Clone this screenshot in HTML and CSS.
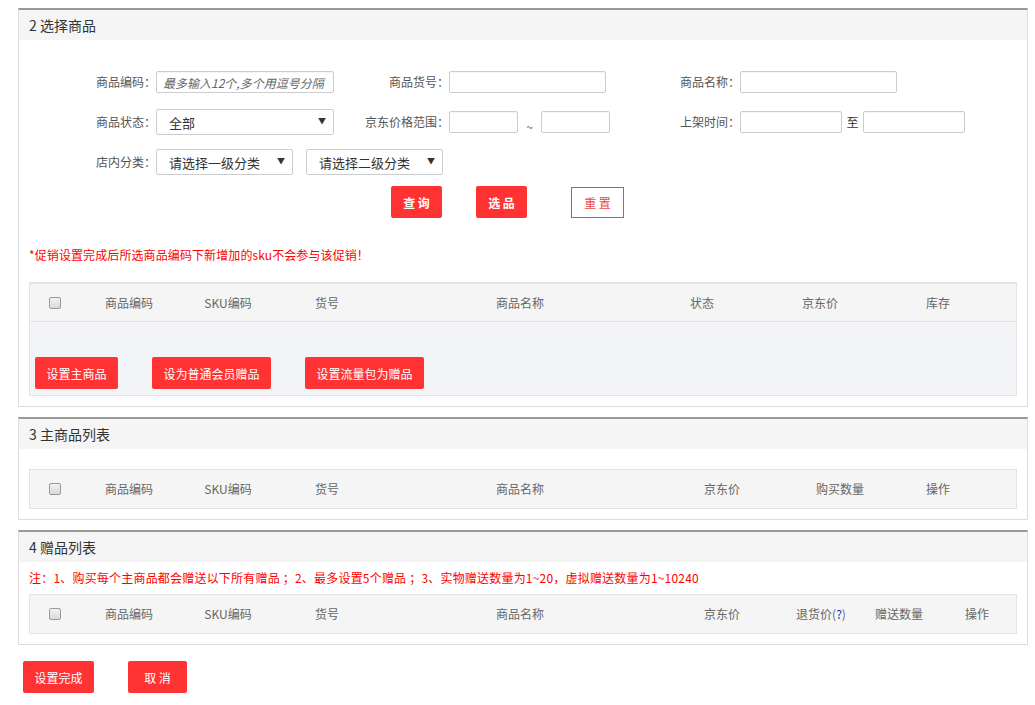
FILE: index.html
```html
<!DOCTYPE html>
<html lang="zh-CN">
<head>
<meta charset="utf-8">
<title>选择商品</title>
<link rel="stylesheet" href="styles.css">
</head>
<body>
<div class="page">
  <section class="panel">
    <div class="panel-head">2 选择商品</div>
    <div class="form">
      <div class="row">
        <label class="lab lab-a">商品编码<span class="p">：</span></label>
        <input class="ipt ipt-a" type="text" placeholder="最多输入12个,多个用逗号分隔">
        <label class="lab lab-b">商品货号<span class="p">：</span></label>
        <div class="cell-b"><input class="ipt ipt-b" type="text"></div>
        <label class="lab lab-c">商品名称<span class="p">：</span></label>
        <input class="ipt ipt-b" type="text">
      </div>
      <div class="row">
        <label class="lab lab-a">商品状态<span class="p">：</span></label>
        <div class="sel sel-a"><select><option>全部</option></select></div>
        <label class="lab lab-b">京东价格范围<span class="p">：</span></label>
        <div class="cell-b">
          <input class="ipt ipt-s" type="text"><span class="tilde">~</span><input class="ipt ipt-s" type="text">
        </div>
        <label class="lab lab-c">上架时间<span class="p">：</span></label>
        <input class="ipt ipt-t" type="text"><span class="to">至</span><input class="ipt ipt-t" type="text">
      </div>
      <div class="row">
        <label class="lab lab-a">店内分类<span class="p">：</span></label>
        <div class="sel sel-b"><select><option>请选择一级分类</option></select></div>
        <div class="sel sel-b sel-gap"><select><option>请选择二级分类</option></select></div>
      </div>
      <div class="row btn-row">
        <button class="btn btn-bold btn-q">查 询</button>
        <button class="btn btn-bold btn-p">选 品</button>
        <button class="btn-line">重 置</button>
      </div>
    </div>
    <p class="note note-1">*促销设置完成后所选商品编码下新增加的sku不会参与该促销<span class="p">！</span></p>
    <div class="table table-1">
      <div class="thead cols-1">
        <span><input class="chk" type="checkbox"></span>
        <span>商品编码</span><span>SKU编码</span><span>货号</span><span>商品名称</span>
        <span>状态</span><span>京东价</span><span>库存</span><span></span>
      </div>
      <div class="tbody-acts">
        <button class="btn btn-w1">设置主商品</button>
        <button class="btn btn-w2">设为普通会员赠品</button>
        <button class="btn btn-w2 btn-gap3">设置流量包为赠品</button>
      </div>
    </div>
  </section>

  <section class="panel">
    <div class="panel-head">3 主商品列表</div>
    <div class="table table-2">
      <div class="thead cols-2">
        <span><input class="chk" type="checkbox"></span>
        <span>商品编码</span><span>SKU编码</span><span>货号</span><span>商品名称</span>
        <span>京东价</span><span>购买数量</span><span>操作</span><span></span>
      </div>
    </div>
  </section>

  <section class="panel">
    <div class="panel-head">4 赠品列表</div>
    <p class="note note-2">注<span class="p">：</span>1、购买每个主商品都会赠送以下所有赠品 <span class="p">；</span>2、最多设置5个赠品 <span class="p">；</span>3、实物赠送数量为1~20<span class="p">，</span>虚拟赠送数量为1~10240</p>
    <div class="table table-3">
      <div class="thead cols-3">
        <span><input class="chk" type="checkbox"></span>
        <span>商品编码</span><span>SKU编码</span><span>货号</span><span>商品名称</span>
        <span>京东价</span><span>退货价(<span class="q">?</span>)</span><span>赠送数量</span><span>操作</span><span></span>
      </div>
    </div>
  </section>

  <div class="footer-acts">
    <button class="btn btn-done">设置完成</button>
    <button class="btn btn-cancel">取 消</button>
  </div>
</div>
</body>
</html>
```

FILE: styles.css
```css
* { box-sizing: border-box; }
body {
  margin: 0;
  background: #fff;
  font-family: "Noto Sans CJK SC", "Liberation Sans", sans-serif;
  font-size: 12px;
  color: #333;
}
.page { padding: 8px 0 0 18px; width: 1028px; }
.p { font-family: "Noto Sans CJK JP", "Noto Sans CJK SC", sans-serif; }

.panel {
  width: 1010px;
  border: 1px solid #ddd;
  border-top: 2px solid #999;
  margin-bottom: 10px;
  padding-bottom: 10px;
}
.panel-head {
  height: 30px;
  line-height: 30px;
  background: #f5f5f5;
  padding-left: 10px;
  font-size: 14px;
  color: #333;
}

.form { padding-top: 22px; }
.row { display: flex; align-items: center; height: 40px; }
.lab { text-align: right; color: #555; font-size: 12px; white-space: nowrap; line-height: 20px; }
.lab-a { width: 137px; }
.lab-b { width: 115px; }
.lab-c { width: 130px; }
.cell-b { width: 161px; display: flex; align-items: center; }

.ipt {
  height: 22px;
  border: 1px solid #ccc;
  border-radius: 2px;
  background: #fff;
  box-shadow: inset 0 1px 1px rgba(0,0,0,0.04);
  font-family: inherit;
  font-size: 12px;
  padding: 0 6px;
  outline: none;
}
.ipt::placeholder { color: #666; font-style: italic; }
.ipt-a { width: 178px; }
.ipt-b { width: 157px; }
.ipt-s { width: 69px; }
.ipt-t { width: 102px; }
.tilde { width: 23px; text-align: center; padding-top: 9px; color: #555; font-size: 12px; line-height: 12px; }
.to { width: 21px; text-align: center; color: #333; font-size: 12px; line-height: 20px; }

.sel { position: relative; height: 26px; }
.sel select {
  -webkit-appearance: none;
  appearance: none;
  width: 100%;
  height: 26px;
  border: 1px solid #ccc;
  border-radius: 2px;
  background: #fff;
  font-family: inherit;
  font-size: 13px;
  color: #333;
  padding: 0 0 0 12px;
  outline: none;
}
.sel::after {
  content: "▼";
  position: absolute;
  right: 8px;
  top: 8px;
  font-size: 8px;
  line-height: 8px;
  color: #333;
}
.sel-a { width: 178px; }
.sel-b { width: 137px; }
.sel-gap { margin-left: 13px; }

.btn {
  height: 32px;
  border: 0;
  border-radius: 2px;
  background: #ff3333;
  color: #fff;
  font-family: inherit;
  font-size: 12px;
  padding: 0;
  cursor: pointer;
}
.btn-bold { font-weight: bold; width: 51px; }
.btn-q { margin-left: 372px; }
.btn-p { margin-left: 34px; }
.btn-line {
  margin-left: 44px;
  width: 53px;
  height: 31px;
  border: 1px solid #e84a4a;
  background: #fff;
  color: #e84a4a;
  font-family: inherit;
  font-size: 12px;
  padding: 0;
}

.note { margin: 0; line-height: 20px; color: #ff0000; font-size: 12px; padding-left: 10px; letter-spacing: 0.1px; }
.note-1 { margin-top: 23px; }
.note-2 { margin-top: 6px; letter-spacing: 0.2px; }

.table {
  margin: 0 10px;
  border: 1px solid #e3e3e3;
}
.table-1 { margin-top: 17px; border-top-width: 2px; }
.table-2 { margin-top: 20px; }
.table-3 { margin-top: 6px; }

.thead {
  display: grid;
  height: 38px;
  align-items: center;
  justify-items: center;
  background: #f5f5f5;
  color: #666;
  font-size: 12px;
  line-height: 20px;
}
.cols-1 { grid-template-columns: 49px 100px 98px 100px 286px 78px 158px 78px 1fr; }
.cols-2 { grid-template-columns: 49px 100px 98px 100px 286px 118px 118px 78px 1fr; }
.cols-3 { grid-template-columns: 49px 100px 98px 100px 286px 118px 80px 76px 80px 1fr; }
.thead .q { color: #2b2bb8; }

.chk {
  -webkit-appearance: none;
  appearance: none;
  width: 12px;
  height: 12px;
  margin: 0;
  display: block;
  border: 1px solid #9a9a9a;
  border-radius: 2px;
  background: linear-gradient(#f2f2f2, #d9d9d9);
}

.table-1 .thead { border-bottom: 1px solid #e3e3e3; }
.tbody-acts {
  background: #f3f4f8;
  height: 73px;
  padding: 35px 5px 6px;
  display: flex;
}
.btn-w1 { width: 83px; }
.btn-w2 { width: 119px; margin-left: 34px; }
.btn-gap3 { margin-left: 34px; }

.footer-acts { display: flex; padding-top: 6px; padding-left: 5px; }
.btn-done { width: 71px; }
.btn-cancel { width: 59px; margin-left: 34px; }
```
